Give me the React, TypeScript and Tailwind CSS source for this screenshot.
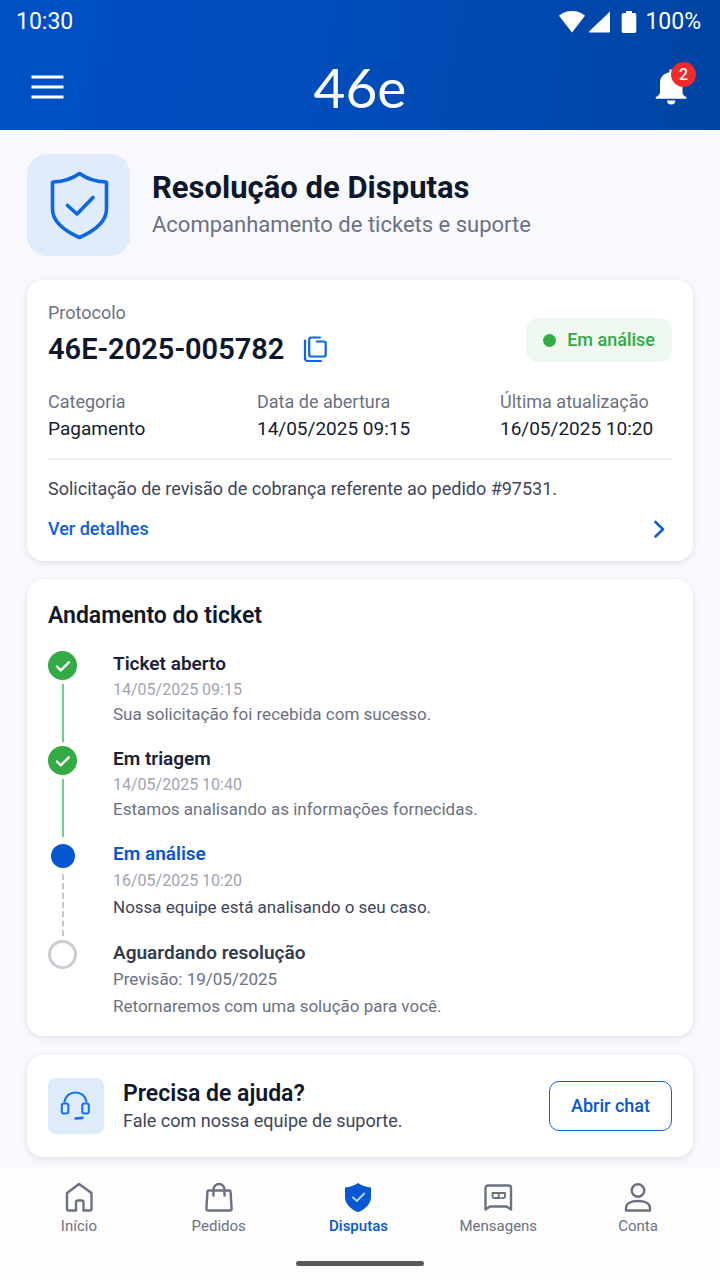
import React from 'react';
import clsx from 'clsx';

type StepStatus = 'done' | 'active' | 'pending';

interface Step {
  title: string;
  date: string;
  description: string;
  status: StepStatus;
}

const steps: Step[] = [
  {
    title: 'Ticket aberto',
    date: '14/05/2025 09:15',
    description: 'Sua solicitação foi recebida com sucesso.',
    status: 'done',
  },
  {
    title: 'Em triagem',
    date: '14/05/2025 10:40',
    description: 'Estamos analisando as informações fornecidas.',
    status: 'done',
  },
  {
    title: 'Em análise',
    date: '16/05/2025 10:20',
    description: 'Nossa equipe está analisando o seu caso.',
    status: 'active',
  },
  {
    title: 'Aguardando resolução',
    date: 'Previsão: 19/05/2025',
    description: 'Retornaremos com uma solução para você.',
    status: 'pending',
  },
];

const details = [
  { label: 'Categoria', value: 'Pagamento' },
  { label: 'Data de abertura', value: '14/05/2025 09:15' },
  { label: 'Última atualização', value: '16/05/2025 10:20' },
];

function StatusBar() {
  return (
    <div className="flex h-11 items-center justify-between pl-4 pr-[19px] text-[23px] leading-7">
      <span>10:30</span>
      <div className="flex items-center">
        <svg className="h-6 w-7" viewBox="0 0 28 24" fill="currentColor">
          <path d="M14 22.500 1 5.800C4.200 2.600 9 1 14 1s9.800 1.600 13 4.800z" />
        </svg>
        <svg className="ml-0.5 h-6 w-6" viewBox="0 0 24 24" fill="currentColor">
          <path d="M22 1.500v20a1 1 0 0 1-1 1H1.800c-.8 0-1.100-.8-.5-1.300z" />
        </svg>
        <svg className="ml-2 mr-[7px] h-6 w-[18px]" viewBox="0 0 18 24" fill="currentColor">
          <path d="M6 1h6v2h2.500A1.800 1.800 0 0 1 16.300 4.800v16.500a1.800 1.800 0 0 1-1.800 1.800h-11a1.800 1.800 0 0 1-1.800-1.800V4.800A1.800 1.800 0 0 1 3.500 3H6z" />
        </svg>
        <span>100%</span>
      </div>
    </div>
  );
}

function Header() {
  return (
    <header className="bg-linear-100 from-[#0050c6] via-[#004cb9] to-[#0044a3] text-white">
      <StatusBar />
      <div className="grid h-[86px] grid-cols-3 items-center px-7">
        <button type="button" aria-label="Menu" className="justify-self-start">
          <svg className="h-10 w-10" viewBox="0 0 40 40" stroke="currentColor" strokeWidth="3.2">
            <path d="M3.500 10h32M3.500 20h32M3.500 30h32" />
          </svg>
        </button>
        <span className="justify-self-center font-[Lato,sans-serif] text-[55px] leading-[60px]">46e</span>
        <button type="button" aria-label="Notificações" className="relative justify-self-end">
          <svg className="h-10 w-10" viewBox="0 0 40 40" fill="currentColor">
            <path d="M17.500 2.500h4v2.800C27.500 6.500 30.500 10.500 30.500 16v8.500c0 3 1 4 3.700 5.500.6.400.4 1.700-.4 1.700H4.400c-.8 0-1-1.300-.4-1.700C6.800 28.500 8 27.500 8 24.500V16c0-5.500 3.300-9.500 9.500-10.700z" />
            <path d="M15 33.500h8.400a4.200 4 0 0 1-8.400 0z" />
          </svg>
          <span className="absolute -right-1 -top-[5px] flex size-[25px] items-center justify-center rounded-full bg-[#ee2a2a] text-base font-medium">
            2
          </span>
        </button>
      </div>
    </header>
  );
}

function Card({ className, children }: { className?: string; children: React.ReactNode }) {
  return (
    <section className={clsx('rounded-2xl bg-white px-[21px] shadow-[0_2px_6px_rgba(30,50,90,0.11)]', className)}>
      {children}
    </section>
  );
}

function TicketCard() {
  return (
    <Card className="pb-[18px] pt-[21px]">
      <div className="flex items-end justify-between">
        <div>
          <p className="text-lg leading-6 text-[#6b7183]">Protocolo</p>
          <div className="mt-[5px] flex items-center gap-[19px]">
            <h2 className="text-[29px] font-semibold leading-[38px] text-[#0e172b]">46E-2025-005782</h2>
            <button type="button" aria-label="Copiar protocolo" className="text-[#0d66e4]">
              <svg
                className="h-7 w-[26px]"
                viewBox="0 0 26 28"
                fill="none"
                stroke="currentColor"
                strokeWidth="2.200"
                strokeLinejoin="round"
                strokeLinecap="round"
              >
                <path d="M17 2.500H8.200A2 2 0 0 0 6.200 4.500v15a2 2 0 0 0 2 2h12.500a2 2 0 0 0 2-2V8.500a2 2 0 0 0-2-2h-7" />
                <path d="M2 5.500v18a2.500 2.500 0 0 0 2.500 2.500h13.500" />
              </svg>
            </button>
          </div>
        </div>
        <span className="mb-1.5 flex h-11 items-center gap-[11px] rounded-xl bg-[#eff9f1] px-[17px] text-lg font-medium text-[#2fab42]">
          <span className="size-[13px] rounded-full bg-[#33ad45]" />
          Em análise
        </span>
      </div>

      <dl className="mt-5 grid grid-cols-[209fr_243fr_172fr] border-b-2 border-[#eff0f4] pb-4 text-lg leading-[27px]">
        {details.map((item) => (
          <div key={item.label}>
            <dt className="text-[#6b7183]">{item.label}</dt>
            <dd className="text-[19px] text-[#141c30]">{item.value}</dd>
          </div>
        ))}
      </dl>

      <p className="mt-[15px] text-lg leading-7 text-[#3c455b]">
        Solicitação de revisão de cobrança referente ao pedido #97531.
      </p>
      <a href="#detalhes" className="mt-3 flex items-center justify-between text-lg font-medium leading-7 text-[#0d60dc]">
        Ver detalhes
        <svg
          className="mr-[3px] h-5 w-5"
          viewBox="0 0 20 20"
          fill="none"
          stroke="currentColor"
          strokeWidth="2.600"
          strokeLinecap="round"
          strokeLinejoin="round"
        >
          <path d="M6.500 3l7.500 7.200L6.500 17.500" />
        </svg>
      </a>
    </Card>
  );
}

function StepMarker({ status }: { status: StepStatus }) {
  if (status === 'done') {
    return (
      <span className="flex size-[29px] items-center justify-center rounded-full bg-[#32ab45] text-white">
        <svg
          className="size-5"
          viewBox="0 0 20 20"
          fill="none"
          stroke="currentColor"
          strokeWidth="2.400"
          strokeLinecap="round"
          strokeLinejoin="round"
        >
          <path d="M4 10.500l3.800 3.800 8-8" />
        </svg>
      </span>
    );
  }
  if (status === 'active') {
    return (
      <span className="flex size-[29px] items-center justify-center">
        <span className="size-6 rounded-full bg-[#0558d2]" />
      </span>
    );
  }
  return <span className="size-[29px] rounded-full border-3 border-[#c9ccd3]" />;
}

function TimelineStep({ step }: { step: Step }) {
  const { title, date, description, status } = step;
  const done = status === 'done';

  return (
    <li className="group flex gap-9">
      <div className="flex flex-col items-center">
        <StepMarker status={status} />
        <span
          className={clsx(
            'my-1 flex-1 group-last:hidden',
            done ? 'w-0.5 bg-[#78cb85]' : 'border-l-2 border-dashed border-[#c3c6ce]'
          )}
        />
      </div>
      <div className="pb-[19px] group-last:pb-0">
        <h3
          className={clsx(
            'text-[19px] font-semibold leading-[26px]',
            done && 'text-[#19223a]',
            status === 'active' && 'text-[#0558d2]',
            status === 'pending' && 'text-[#333b50]'
          )}
        >
          {title}
        </h3>
        <div className={done ? 'leading-[25px]' : 'leading-[27px]'}>
          <p className={status === 'pending' ? 'text-[17px] text-[#6b7183]' : 'text-[16px] text-[#a0a4af]'}>
            {date}
          </p>
          <p className={clsx('text-[17px]', status === 'active' ? 'text-[#3c455b]' : 'text-[#6b7183]')}>
            {description}
          </p>
        </div>
      </div>
    </li>
  );
}

function HelpCard() {
  return (
    <Card className="flex items-center py-[23px]">
      <div className="flex size-14 items-center justify-center rounded-lg bg-[#deebfb] text-[#1673f0]">
        <svg
          className="size-8"
          viewBox="0 0 32 32"
          fill="none"
          stroke="currentColor"
          strokeWidth="2.100"
          strokeLinecap="round"
          strokeLinejoin="round"
        >
          <path d="M4.500 11.500C5.500 6 10 2.500 15.500 2.500S25.500 6 26.500 11.500" />
          <rect x="1.800" y="13.500" width="6.500" height="10" rx="2" />
          <rect x="22.300" y="13.500" width="6.500" height="10" rx="2" />
          <path d="M15.500 28.500l7-.6" strokeWidth="2.600" />
        </svg>
      </div>
      <div className="ml-[19px] flex-1 pt-0.5">
        <h2 className="text-[23px] font-semibold leading-7 text-[#0e172b]">Precisa de ajuda?</h2>
        <p className="text-lg leading-[26px] text-[#3c455b]">Fale com nossa equipe de suporte.</p>
      </div>
      <button
        type="button"
        className="h-[50px] rounded-[10px] border border-[#0d60dc] px-[21px] text-lg font-medium text-[#0558d2]"
      >
        Abrir chat
      </button>
    </Card>
  );
}

const navItems = [
  {
    label: 'Início',
    icon: (
      <path d="M3 11 15 2 27.500 11V27a1.500 1.500 0 0 1-1.500 1.500h-6.500V20.500a2 2 0 0 0-2-2h-3.500a2 2 0 0 0-2 2v8H4.500A1.500 1.500 0 0 1 3 27z" />
    ),
  },
  {
    label: 'Pedidos',
    icon: (
      <>
        <path d="M4.800 8.500h20.400a1.400 1.400 0 0 1 1.400 1.300l1 17a1.600 1.600 0 0 1-1.600 1.700H4a1.600 1.600 0 0 1-1.600-1.700l1-17a1.400 1.400 0 0 1 1.400-1.300z" />
        <path d="M9.500 13.500V7.500a5.500 5.500 0 0 1 11 0v6" />
      </>
    ),
  },
  {
    label: 'Disputas',
    active: true,
    icon: (
      <>
        <path
          d="M15 1c3.500 2.600 8 4 13 4.500V15c0 7-5.500 12-13 15.300C7.500 27 2 22 2 15V5.500C7 5 11.500 3.600 15 1z"
          fill="currentColor"
          stroke="none"
        />
        <path d="M10 15.500l3.800 3.500 7.500-7.500" stroke="#b9d4f7" strokeWidth="1.900" />
      </>
    ),
  },
  {
    label: 'Mensagens',
    icon: (
      <>
        <path d="M2.500 27.500V6A2.500 2.500 0 0 1 5 3.500h20.500A2.500 2.500 0 0 1 28 6v21.500l-4.500-3H7z" />
        <path d="M9.500 11h12.500v3.500a1.500 1.500 0 0 1-1.500 1.500H19M17 16h-6a1.500 1.500 0 0 1-1.500-1.500V11M15.700 11v5" strokeWidth="1.900" />
      </>
    ),
  },
  {
    label: 'Conta',
    icon: (
      <>
        <circle cx="15" cy="8.500" r="6.300" />
        <path d="M3 28.500v-2.500C3 21.500 8 19 15 19s12 2.500 12 7v2.500z" />
      </>
    ),
  },
];

function BottomNav() {
  return (
    <nav className="mt-auto bg-[#fdfdfe] py-3.5">
      <ul className="grid grid-cols-5 pl-[9px] pr-3">
        {navItems.map((item) => (
          <li key={item.label}>
            <a
              href={`#${item.label.toLowerCase()}`}
              className={clsx(
                'flex flex-col items-center text-[15px] leading-5',
                item.active ? 'font-medium text-[#0558d2]' : 'text-[#6b7183]'
              )}
            >
              <svg
                className="mb-1 size-[30px]"
                viewBox="0 0 30 30"
                fill="none"
                stroke="currentColor"
                strokeWidth="2.400"
                strokeLinecap="round"
                strokeLinejoin="round"
              >
                {item.icon}
              </svg>
              {item.label}
            </a>
          </li>
        ))}
      </ul>
      <div className="mx-auto mt-[25px] h-[5px] w-32 rounded-full bg-[#58585a]" />
    </nav>
  );
}

export default function App() {
  return (
    <div className="flex min-h-screen flex-col bg-[#f8f9fc] font-[Roboto,sans-serif]">
      <Header />
      <main className="px-[27px] pb-[11px] pt-6">
        <div className="flex items-center gap-[22px]">
          <div className="flex h-[102px] w-[103px] items-center justify-center rounded-[20px] bg-[#e1ecfa] text-[#0d66e4]">
            <svg
              className="h-[70px] w-16"
              viewBox="0 0 64 70"
              fill="none"
              stroke="currentColor"
              strokeWidth="3.600"
              strokeLinecap="round"
              strokeLinejoin="round"
            >
              <path d="M32.500 3.500c7 5 16 8 26 8.500q1 0 1 1V39c0 12-10 21-27 28.500C15.500 60 5.500 51 5.500 39V13q0-1 1-1C16.500 11.500 25.500 8.500 32.500 3.500z" />
              <path d="M20.500 35.500l9.500 8.500 16-16.500" />
            </svg>
          </div>
          <div className="pt-[3px]">
            <h1 className="text-[31px] font-bold leading-9 text-[#0e172b]">Resolução de Disputas</h1>
            <p className="text-[22px] leading-[37px] text-[#6b7183]">Acompanhamento de tickets e suporte</p>
          </div>
        </div>

        <div className="mt-6 flex flex-col gap-[19px]">
          <TicketCard />
          <Card className="pb-4 pt-[22px]">
            <h2 className="mb-[21px] text-[23px] font-semibold leading-7 text-[#0e172b]">Andamento do ticket</h2>
            <ol>
              {steps.map((step) => (
                <TimelineStep key={step.title} step={step} />
              ))}
            </ol>
          </Card>
          <HelpCard />
        </div>
      </main>
      <BottomNav />
    </div>
  );
}
